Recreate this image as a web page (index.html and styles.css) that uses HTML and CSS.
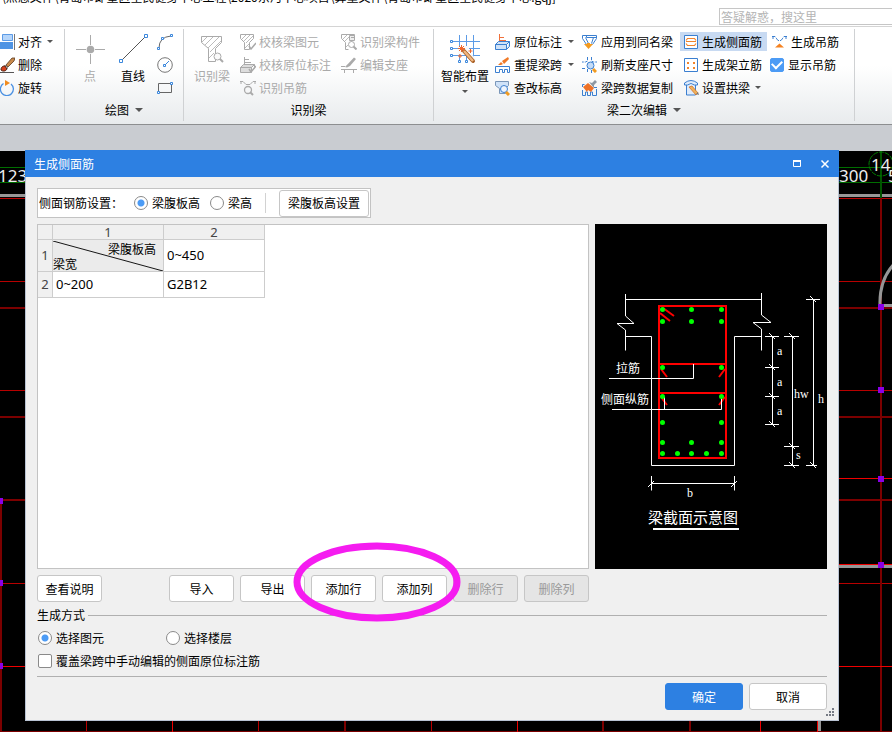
FILE: index.html
```html
<!DOCTYPE html>
<html lang="zh-CN">
<head>
<meta charset="utf-8">
<title>生成侧面筋</title>
<link rel="stylesheet" href="styles.css">
</head>
<body>
<header class="app-bar">
  <div class="app-path"><span>\点态文件\青岛市即墨区全民健身中心工程\2020东河中心项目\算量文件\青岛市即墨区全民健身中心.gqj]</span></div>
  <input class="search" type="text" placeholder="答疑解惑，搜这里" aria-label="搜索">
</header>

<nav class="ribbon">
  <section class="group group-modify">
    <div class="tools">
      <div class="stack">
        <button class="tool"><svg width="15" height="16" viewBox="0 0 15 16"><path d="M2.500.5h10v6h-10z" fill="#b5d5fa" stroke="#5c9be6"/><path d="M0 8h13v7H0z" fill="#4f94e4"/><path d="M14.500 0v16" stroke="#777"/></svg>对齐<i class="caret"></i></button>
        <button class="tool"><svg width="15" height="16" viewBox="0 0 15 16"><path d="M6 8l6-7 3 0-1 3-6 6z" fill="#c98a4c" stroke="#5a3a20" stroke-width=".8"/><path d="M5 8l3 3-2 1-2-2z" fill="#eee" stroke="#555" stroke-width=".6"/><path d="M1 13c0-4 3-4 4-4l2 3c-1 2-4 3-6 1z" fill="#d4401e" stroke="#4a2010"/><path d="M0 15.500h14" stroke="#555"/></svg>删除</button>
        <button class="tool"><svg width="15" height="16" viewBox="0 0 15 16"><path d="M3.500 3.500A6.500 6.500 0 1 0 11 4" fill="none" stroke="#4a90e2" stroke-width="1.300"/><path d="M5 0l5 3-5 3z" fill="#f08c20"/></svg>旋转</button>
      </div>
    </div>
  </section>

  <section class="group group-draw">
    <div class="tools">
      <button class="big" disabled><svg width="30" height="30" viewBox="0 0 30 30"><path d="M15.500 1v10M15.500 20v10M1 15.500h10M20 15.500h10" stroke="#aaa"/><circle cx="15.500" cy="15.500" r="3.800" fill="#aaa"/></svg>点</button>
      <button class="big"><svg width="30" height="30" viewBox="0 0 30 30"><path d="M4 26L27 3" stroke="#555"/><path d="M1.500 25.500h3v3h-3zM26.500.5h3v3h-3z" fill="#fff" stroke="#3b87dc"/></svg>直线</button>
      <div class="stack shapes">
        <button class="tool" aria-label="弧"><svg width="16" height="16" viewBox="0 0 16 16"><path d="M2 14Q2 3 14 2" fill="none" stroke="#666"/><path d="M.5 13.500h2v2h-2zM4.500 3.500h2v2h-2zM13.500.5h2v2h-2z" fill="#fff" stroke="#3b87dc"/></svg></button>
        <button class="tool" aria-label="圆"><svg width="16" height="16" viewBox="0 0 16 16"><circle cx="8" cy="8" r="7.300" fill="none" stroke="#777"/><path d="M8 8l4-4" stroke="#3b87dc"/><path d="M6.500 7.500h2v2h-2z" fill="#fff" stroke="#3b87dc"/></svg></button>
        <button class="tool" aria-label="矩形"><svg width="16" height="16" viewBox="0 0 16 16"><path d="M1.500 3.500h13v9h-13z" fill="none" stroke="#666"/><path d="M.5 11.500h2v2h-2zM13.500 2.500h2v2h-2z" fill="#fff" stroke="#3b87dc"/></svg></button>
      </div>
    </div>
    <div class="group-name">绘图<i class="caret wide"></i></div>
  </section>

  <section class="group group-identify">
    <div class="tools">
      <button class="big" disabled><svg width="24" height="30" viewBox="0 0 24 30"><path d="M1.500 2.500h20v6l-6 6v13h-7v-13l-7-6z" fill="none" stroke="#aaa"/><path d="M2 8l5-5M5 11l8-8M8 14l11-11M10 18l11-11M9 24l5-5" stroke="#bbb"/><circle cx="17.500" cy="22.500" r="3.500" fill="#fafafa" stroke="#aaa"/><path d="M20 25l3 3" stroke="#aaa" stroke-width="2"/></svg>识别梁</button>
      <div class="stack">
        <button class="tool" disabled><svg width="16" height="16" viewBox="0 0 16 16"><path d="M.5.5h13v4l-4 4v7h-5v-7l-4-4z" fill="none" stroke="#aaa"/><path d="M2 5l4-4M4 7l6-6M6 9l7-7M5 14l4-4" stroke="#bbb"/><path d="M9 12l2 3 5-6" fill="none" stroke="#aaa" stroke-width="1.500"/></svg>校核梁图元</button>
        <button class="tool" disabled><svg width="16" height="16" viewBox="0 0 16 16"><path d="M4.500 0v8M5 2.500h4M5 5.500h6" stroke="#aaa"/><path d="M.5 10.500l3-3h11l-3 3zM.5 10.500h11v5H.5zM14.500 7.500v4" fill="#ddd" stroke="#aaa"/><path d="M9 12l2 3 5-6" fill="none" stroke="#aaa" stroke-width="1.500"/></svg>校核原位标注</button>
        <button class="tool" disabled><svg width="16" height="16" viewBox="0 0 16 16"><path d="M0 1.500h3l3 3h4l3-3h3M1 1v3M15 1v3" fill="none" stroke="#aaa"/><circle cx="8" cy="10" r="3.500" fill="none" stroke="#aaa" stroke-width="1.300"/><path d="M10 12l3 3" stroke="#aaa" stroke-width="2"/></svg>识别吊筋</button>
      </div>
      <div class="stack">
        <button class="tool" disabled><svg width="16" height="16" viewBox="0 0 16 16"><path d="M.5.5h13v4l-4 4v3M.5.5v4l4 4v7h3" fill="none" stroke="#aaa"/><path d="M2 5l4-4M4 7l4-4M5 13l2-2" stroke="#bbb"/><path d="M8.500 1.500h5v5h-5z" fill="#eee" stroke="#aaa"/><path d="M10 3.500h3" stroke="#aaa"/><circle cx="10.500" cy="10.500" r="3" fill="#fff" stroke="#aaa"/><path d="M12.500 12.500l3 3" stroke="#aaa" stroke-width="2"/></svg>识别梁构件</button>
        <button class="tool" disabled><svg width="16" height="16" viewBox="0 0 16 16"><path d="M0 12.500h16M3.500 12v4M12.500 12v4M0 9.500h4" stroke="#aaa"/><path d="M4 10l9-9.500 2 1.500-6 7-3 1.500z" fill="#aaa"/></svg>编辑支座</button>
      </div>
    </div>
    <div class="group-name">识别梁</div>
  </section>

  <section class="group group-edit">
    <div class="tools">
      <button class="big"><svg width="30" height="30" viewBox="0 0 30 30"><path d="M3 7.500h27M3 14.500h27M3 21.500h27M9.500 1v26M16.500 1v26M23.500 1v24" stroke="#5c9be6"/><path d="M.5 6.500h2v2h-2zM.5 13.500h2v2h-2zM.5 20.500h2v2h-2zM8.500 26.500h2v2h-2zM15.500 26.500h2v2h-2z" fill="#fff" stroke="#3b87dc"/><path d="M8 12h11v5l7 8-3 4-9-10-6 2z" fill="#fafafa"/><path d="M14 17l9 10" stroke="#a85e23" stroke-width="4" stroke-linecap="round"/><path d="M14 17l9 10" stroke="#f0b780" stroke-width="2.500"/><path d="M11.500 11v7M8 14.500h7M9 12l5 5M14 12l-5 5M20.500 15v4M18.500 17h4M10 20v4M8 22h4" stroke="#f0662a"/></svg>智能布置<i class="caret"></i></button>
      <div class="stack">
        <button class="tool"><svg width="15" height="16" viewBox="0 0 15 16"><path d="M4.500 0v8M5 3.500h4M5 6.500h6" stroke="#f0703a"/><path d="M.5 10.500l3-3h11l-3 3zM.5 10.500h11v5H.5zM11.500 15.500l3-3v-5" fill="#cfe2f8" stroke="#3b7fd0"/></svg>原位标注<i class="caret"></i></button>
        <button class="tool"><svg width="15" height="16" viewBox="0 0 15 16"><path d="M.5 15.500v-6h14v6h-2v-3h-3v3h-2v-3h-3v3z" fill="none" stroke="#3b7fd0"/><path d="M3 8l3-3 2 2-2 1zM7 4l6-4 1 2-5 5z" fill="#f07a28"/></svg>重提梁跨<i class="caret"></i></button>
        <button class="tool"><svg width="15" height="16" viewBox="0 0 15 16"><path d="M.5 1.500h13v4l-3 3v5h-6v-5l-4-3z" fill="#cfe2f8" stroke="#7a96b8"/><circle cx="9" cy="9" r="3.500" fill="#edf4fd" stroke="#3b7fd0"/><path d="M11 12l3 3" stroke="#f09a20" stroke-width="3"/></svg>查改标高</button>
      </div>
      <div class="stack">
        <button class="tool"><svg width="15" height="16" viewBox="0 0 15 16"><path d="M.5 1.500h14v3l-4 6M.5 1.500v3l4 6M4.500 1.500v2h10M3.500 3.500l3 6M11.500 3.500l-2 6" fill="none" stroke="#3b7fd0"/><path d="M2 10h3v-1h3v1h3l-4.500 5z" fill="#f39a20"/></svg>应用到同名梁</button>
        <button class="tool"><svg width="15" height="16" viewBox="0 0 15 16"><path d="M5.500 0v4l-2 1H0M9.500 0v4l2 1H15M0 11.500h4M5.500 12v4M9.500 13v3" fill="none" stroke="#3b7fd0" stroke-dasharray="3 1"/><circle cx="8.500" cy="8.500" r="3.500" fill="#c5dcf7" stroke="#3b7fd0"/><path d="M11 12l3 3" stroke="#f09a20" stroke-width="3"/></svg>刷新支座尺寸</button>
        <button class="tool"><svg width="15" height="16" viewBox="0 0 15 16"><path d="M.5 10v5.500h3V12h2v3.500h3V12h2v3.500h4V9M.5 7V4.500h2M12 7.500h3" fill="none" stroke="#3b7fd0"/><path d="M1 7l5-4 6 5-3 4-3-2-1 2z" fill="#ee7228"/><path d="M7 2l3 1 3-3 2 2-3 3 0 3z" fill="#8d98a3"/></svg>梁跨数据复制</button>
      </div>
      <div class="stack">
        <button class="tool active"><svg width="15" height="16" viewBox="0 0 15 16"><path d="M.5 1.500h13v13H.5z" fill="#fff" stroke="#3b7fd0"/><path d="M2 6.500l1.500-2h7l1.500 2M2 7.500h10M2 9.500l1.500 2h7l1.500-2" fill="none" stroke="#f2842c" stroke-width="1.200"/></svg>生成侧面筋</button>
        <button class="tool"><svg width="15" height="16" viewBox="0 0 15 16"><path d="M.5 1.500h13v13H.5z" fill="#fff" stroke="#3b7fd0"/><path d="M3 5h2v2H3zM9 5h2v2H9zM3 10h2v2H3zM9 10h2v2H9z" fill="#f2842c"/></svg>生成架立筋</button>
        <button class="tool"><svg width="15" height="16" viewBox="0 0 15 16"><path d="M.5 5V3Q7-2 13.500 3v2h-3Q7 2 3.500 5zM2.500 5v10h9V5" fill="#dfebfa" stroke="#3b7fd0"/><path d="M5 7l3-1 6 7-2 2z" fill="#f0b25a" stroke="#d06a20" stroke-width=".7"/><path d="M12 14l2-2 1 3z" fill="#777"/></svg>设置拱梁<i class="caret"></i></button>
      </div>
      <div class="stack">
        <button class="tool hanger"><svg width="15" height="16" viewBox="0 0 15 16"><path d="M0 2.500h3l3 4h3l3-4h3M1 2v3M14 2v3" fill="none" stroke="#3b7fd0" stroke-dasharray="4 1"/><path d="M3 13.500l4.500-4 4.500 4z" fill="#f58220"/></svg>生成吊筋</button>
        <label class="tool"><input class="check" type="checkbox" checked>显示吊筋</label>
      </div>
    </div>
    <div class="group-name">梁二次编辑<i class="caret wide"></i></div>
  </section>
</nav>

<main class="workspace">
  <svg class="drawing" viewBox="0 151 892 581" preserveAspectRatio="xMinYMin slice">
    <g fill="none" shape-rendering="crispEdges">
      <path d="M0 167.500H892M0 182.500H892" stroke="#006e00"/>
      <path d="M0 195.500H892M839 566.500H892M819.500 700V732M880 305.500H892" stroke="#969696" stroke-width="3"/>
      <path d="M0 281.500H892M0 390.500H892M0 583.500H892M86.500 700V732M258.500 700V732M431.500 700V732M0 198.500H892" stroke="#b80000"/>
      <path d="M0 308H892M0 417H892M0 500H892M881 198V732M345 700V732M603 700V732M690 700V732M0.500 500V732M0 731.500H892" stroke="#7c0000" stroke-width="2"/>
      <path d="M839 478.500H892M839 564.500H892M0 666.500H892M172.500 700V732M517.500 700V732M760.500 700V732M817.500 700V732" stroke="#f00000"/>
      <path d="M881 151V198" stroke="#005500" stroke-width="2"/>
    </g>
    <path d="M880 306Q879 280 894 264" fill="none" stroke="#969696" stroke-width="3"/>
    <circle cx="881" cy="164" r="12" fill="none" stroke="#008000" stroke-dasharray="5 1"/>
    <path d="M878 304h6v6h-6zM878 387h6v6h-6zM878 476h6v6h-6zM878 562h6v6h-6zM-3 498h6v6h-6zM-3 580h6v6h-6zM-3 663h6v6h-6z" fill="#8a00e6"/>
    <g class="axis-text"><text x="-2" y="182">123</text><text x="839" y="182">300</text><text x="871" y="171">14</text><text x="888" y="182">5</text></g>
  </svg>

  <div class="dialog" role="dialog" aria-labelledby="dialog-title">
    <div class="dialog-title">
      <span id="dialog-title">生成侧面筋</span>
      <button aria-label="最大化"><svg width="10" height="10" viewBox="0 0 10 10"><path d="M1.500 2.500h7v5h-7z" fill="none" stroke="#fff"/><path d="M1 2h8" stroke="#fff" stroke-width="2"/></svg></button>
      <button aria-label="关闭"><svg width="10" height="10" viewBox="0 0 10 10"><path d="M1.500 1.500l7 7M8.500 1.500l-7 7" stroke="#fff" stroke-width="1.500"/></svg></button>
    </div>
    <div class="dialog-body">
      <div class="settings">
        <span class="settings-name">侧面钢筋设置：</span>
        <label class="option"><input class="radio" type="radio" name="basis" checked>梁腹板高</label>
        <label class="option"><input class="radio" type="radio" name="basis">梁高</label>
        <span class="divider"></span>
        <button class="btn web-height">梁腹板高设置</button>
      </div>

      <div class="panes">
        <div class="sheet">
          <table>
            <thead><tr><th class="row-no"></th><th class="col-a">1</th><th class="col-b">2</th></tr></thead>
            <tbody>
              <tr class="first"><th>1</th><td class="corner"><div><svg viewBox="0 0 110 31" preserveAspectRatio="none"><path d="M0 0L110 31" stroke="#111" stroke-width="1"/></svg><span>梁腹板高</span><span>梁宽</span></div></td><td>0~450</td></tr>
              <tr class="second"><th>2</th><td>0~200</td><td>G2B12</td></tr>
            </tbody>
          </table>
        </div>
        <svg class="section-view" width="232" height="345" viewBox="595 224 232 345">
          <path d="M595 224h232v345H595z"/>
          <g fill="none" stroke="#fff">
            <path d="M625.500 299.500H761.500M625.500 294V316L634 323.500H617L625.500 330V350.500M761.500 293V315L771 322.500H753L761.500 329V350.500M625.500 336.500H651.500V465.500H734.500V336.500H761.500"/>
            <path d="M772.500 336.500V424.500M765 336.500H779M765 367.500H779M765 396.500H779M765 424.500H779M792.500 336.500V465.500M784 336.500H799M784 446.500H799M784 465.500H799M813.500 299.500V465.500M806 299.500H820M806 465.500H817M651.500 483.500H734.500M651.500 476V490.500M734.500 476V490.500"/>
            <path d="M769 333l6 6M769 364l6 6M769 393l6 6M769 421l6 6M789 333l6 6M789 443l6 6M789 462l6 6M810 296l6 6M810 462l6 6M648 487l6-6M731 487l6-6"/>
            <path d="M653 529H739" stroke-width="2"/>
          </g>
          <path d="M659 306H726V458H659zM659 364H726M659 393H726M663 308l11 8M660 313l10 8M661 369l6 8M725 369l-6 8M661 397l6 8M725 397l-6 8" fill="none" stroke="#f00" stroke-width="2"/>
          <path d="M609 378.500H693.500V364M612 409.500H721.500V396M664.500 397V409.500" fill="none" stroke="#fff"/>
          <path class="bars" d="M662.500 309.500h0M691.500 309.500h0M721.500 309.500h0M662.500 321.500h0M691.500 321.500h0M721.500 321.500h0M662.500 367.500h0M721.500 367.500h0M662.500 396.500h0M721.500 396.500h0M662.500 422.500h0M721.500 422.500h0M662.500 442.500h0M691.500 442.500h0M721.500 442.500h0M662.500 453.500h0M677.500 453.500h0M691.500 453.500h0M706.500 453.500h0M721.500 453.500h0"/>
          <g class="view-text"><text x="616" y="373">拉筋</text><text x="601" y="404">侧面纵筋</text><text class="view-title" x="648" y="523">梁截面示意图</text></g>
          <g class="view-dims"><text x="777" y="355">a</text><text x="777" y="386">a</text><text x="777" y="415">a</text><text x="794" y="398">hw</text><text x="796" y="459">s</text><text x="818" y="403">h</text><text x="687" y="497">b</text></g>
        </svg>
      </div>

      <div class="actions">
        <button class="btn help">查看说明</button>
        <button class="btn">导入</button>
        <button class="btn">导出</button>
        <div class="marked">
          <button class="btn">添加行</button>
          <button class="btn">添加列</button>
          <svg class="marker" width="168" height="80" viewBox="0 0 168 80"><ellipse cx="84" cy="40" rx="80" ry="36" fill="none" stroke="#f51cf0" stroke-width="7"/></svg>
        </div>
        <button class="btn" disabled>删除行</button>
        <button class="btn" disabled>删除列</button>
      </div>

      <fieldset class="mode">
        <legend>生成方式</legend>
        <div class="mode-row">
          <label class="option"><input class="radio" type="radio" name="mode" checked>选择图元</label>
          <label class="option"><input class="radio" type="radio" name="mode">选择楼层</label>
        </div>
        <div class="mode-row">
          <label class="option"><input class="check" type="checkbox">覆盖梁跨中手动编辑的侧面原位标注筋</label>
        </div>
      </fieldset>

      <div class="confirm">
        <button class="btn primary">确定</button>
        <button class="btn">取消</button>
      </div>
    </div>
    <svg class="grip" width="9" height="9" viewBox="0 0 9 9"><path d="M6 0h2v2H6zM6 3h2v2H6zM6 6h2v2H6zM3 3h2v2H3zM3 6h2v2H3zM0 6h2v2H0z" fill="#777b85"/></svg>
  </div>
</main>
</body>
</html>
```
FILE: styles.css
```css
* { box-sizing: border-box; }

body {
  margin: 0;
  min-height: 100vh;
  display: flex;
  flex-direction: column;
  overflow: hidden;
  background: #fff;
  color: #000;
  font: 12px/18px "Noto Sans CJK SC", sans-serif;
}

button, input {
  font: inherit;
  color: inherit;
  margin: 0;
}

button {
  padding: 0;
  border: 0;
  background: none;
  white-space: nowrap;
}

svg { display: block; flex: none; }

/* Application bar */
.app-bar {
  height: 26px;
  display: flex;
  justify-content: space-between;
}

.app-path {
  height: 6px;
  padding-left: 1px;
  display: flex;
  align-items: flex-end;
  overflow: hidden;
  white-space: nowrap;
}

.search {
  width: 173px;
  height: 17px;
  margin-top: 8px;
  padding: 0 1px;
  border: 1px solid #c6c6c6;
  border-right: 0;
  outline: 0;
}

.search::placeholder { color: #b4b4b4; opacity: 1; }

/* Ribbon */
.ribbon {
  height: 99px;
  display: flex;
  border-top: 1px solid #d4d4d4;
  border-bottom: 1px solid #8c8e90;
  background: linear-gradient(#fff 40%, #e8ebed);
}

.group {
  display: flex;
  flex-direction: column;
  margin: 2px 0 3px;
  padding-top: 1px;
  border-right: 1px solid #cfd1d3;
}

.tools { display: flex; }

.stack { display: flex; flex-direction: column; }

.tool {
  height: 23px;
  display: flex;
  align-items: center;
  gap: 3px;
  white-space: nowrap;
}

.big {
  height: 69px;
  padding-top: 4px;
  display: flex;
  flex-direction: column;
  align-items: center;
  gap: 3px;
}

.tool:disabled, .big:disabled { color: #aaa; }

.caret {
  border: 3px solid transparent;
  border-top-color: #555;
  border-bottom: 0;
}

.big .caret { margin-top: 2px; }
.caret.wide { border-width: 4px 4px 0; }

.tool .caret { margin-left: 2px; }

.group-name {
  height: 26px;
  display: flex;
  align-items: center;
  justify-content: center;
  gap: 6px;
}

.group-modify { width: 65px; }

.group-draw { width: 119px; }
.group-draw .tools { padding-left: 10px; }
.group-draw .big { width: 30px; margin-right: 13px; }
.group-draw .shapes { margin-left: -4px; }

.group-identify { width: 250px; }
.group-identify .tools { padding-left: 10px; gap: 10px; }

.group-edit { width: 421px; }
.group-edit .tools { padding-left: 7px; gap: 6px; }
.group-edit .tool { gap: 4px; }
.group-edit .stack:nth-child(3) { margin-left: 2px; }
.group-edit .stack:nth-child(4) { margin-left: 1px; }
.group-edit .stack:nth-child(5) { margin-left: -3px; }
.tool.active { margin: 2px 0; height: 19px; background: #c8daf2; }
.group-edit .stack:nth-child(4) .tool { padding: 0 5px 0 4px; gap: 3px; }
.hanger { padding-left: 2px; }

/* Drawing area */
.workspace {
  flex: 1;
  position: relative;
  padding: 25px 53px 11px 25px;
  background: linear-gradient(#c9ccd1 26px, #000 26px);
}

.drawing {
  position: absolute;
  left: 0;
  top: 26px;
  width: 100%;
  height: calc(100% - 26px);
}

.axis-text { fill: #eee; font: 17px "Noto Sans", sans-serif; }

/* Dialog */
.dialog {
  position: relative;
  border: 1px solid #b9c3d3;
  border-top: 0;
  background: #f0f0f0;
}

.dialog-title {
  height: 27px;
  margin: 0 -1px;
  padding: 0 9px;
  display: flex;
  align-items: center;
  gap: 18px;
  background: #2d80e2;
  color: #fff;
}

.dialog-title span { margin-right: auto; }

.dialog-body { padding: 11px 11px 10px; }

.settings {
  width: max-content;
  height: 30px;
  padding: 0 1px;
  display: flex;
  align-items: center;
  border: 1px solid #c3c3c3;
  background: #fff;
}

.settings-name { margin-right: 11px; }
.settings .option { margin-right: 10px; }

.divider { width: 1px; height: 20px; margin: 0 13px 0 3px; background: #d2d2d2; }

.option { display: flex; align-items: center; gap: 4px; }

.radio, .check {
  appearance: none;
  flex: none;
  width: 14px;
  height: 14px;
  border: 1px solid #8a8a8a;
  background: #fff;
}

.radio { border-radius: 50%; }

.radio:checked { background: radial-gradient(circle, #4c9bf5 3px, #fff 4px); }

.check { border-radius: 2px; }

.check:checked {
  display: grid;
  place-items: center;
  border-color: #4c9bf5;
  background: #4c9bf5;
}

.check:checked::before {
  content: "";
  width: 8px;
  height: 5px;
  border: solid #fff;
  border-width: 0 0 2px 2px;
  transform: translateY(-1px) rotate(-45deg);
}

.btn {
  width: 65px;
  height: 27px;
  border: 1px solid #c6c6c6;
  border-radius: 3px;
  background: #fff;
}

.btn:disabled { background: #e5e5e5; color: #999; }

.web-height { width: 90px; }

.panes {
  margin-top: 6px;
  display: flex;
  gap: 6px;
}

.sheet {
  flex: 1;
  border: 1px solid #c3c3c3;
  background: #fff;
}

table {
  border-collapse: separate;
  border-spacing: 0;
  table-layout: fixed;
  width: 227px;
  font: 13px/15px "Noto Sans", sans-serif;
}

th, td {
  padding: 0;
  border: solid #cdcdcd;
  border-width: 0 1px 1px 0;
}

th { background: #f0f0f0; color: #444; font-weight: normal; text-align: center; }
td { padding-left: 3px; }

thead th { line-height: 14px; }
.row-no { width: 15px; }
.col-a { width: 111px; }
.first { height: 32px; }
.second { height: 26px; }

.corner { padding: 0; background: #ebebeb; font: 12px/15px "Noto Sans CJK SC", sans-serif; }

.corner div { position: relative; display: flex; flex-direction: column; }
.corner svg { position: absolute; width: 100%; height: 100%; }
.corner span:nth-of-type(1) { align-self: flex-end; padding-right: 7px; }

.view-text { fill: #fff; font: 12px "Noto Sans CJK SC", sans-serif; }
.view-title { font-size: 15px; }
.view-dims { fill: #fff; font: 12px "Liberation Serif", serif; }
.bars { stroke: #0f0; stroke-width: 5; stroke-linecap: round; }

.actions {
  margin-top: 6px;
  display: flex;
  gap: 6px;
}

.help { margin-right: 61px; }

.marked { position: relative; display: flex; gap: 6px; }

.marker {
  position: absolute;
  left: -18px;
  top: -33px;
  z-index: 1;
  pointer-events: none;
}

.mode {
  margin: 4px 0 0;
  padding: 2px 0 4px;
  border: solid #b0b0b0;
  border-width: 1px 0;
}

.mode legend { padding: 0 3px 0 0; }

.mode-row {
  height: 23px;
  padding-left: 1px;
  display: flex;
  align-items: center;
  gap: 62px;
}

.confirm {
  margin-top: 6px;
  display: flex;
  justify-content: flex-end;
  gap: 6px;
}

.confirm .btn { width: 78px; }

.btn.primary { border-color: #2d80e2; background: #2d80e2; color: #fff; }

.grip { position: absolute; right: 3px; bottom: 3px; }
```
